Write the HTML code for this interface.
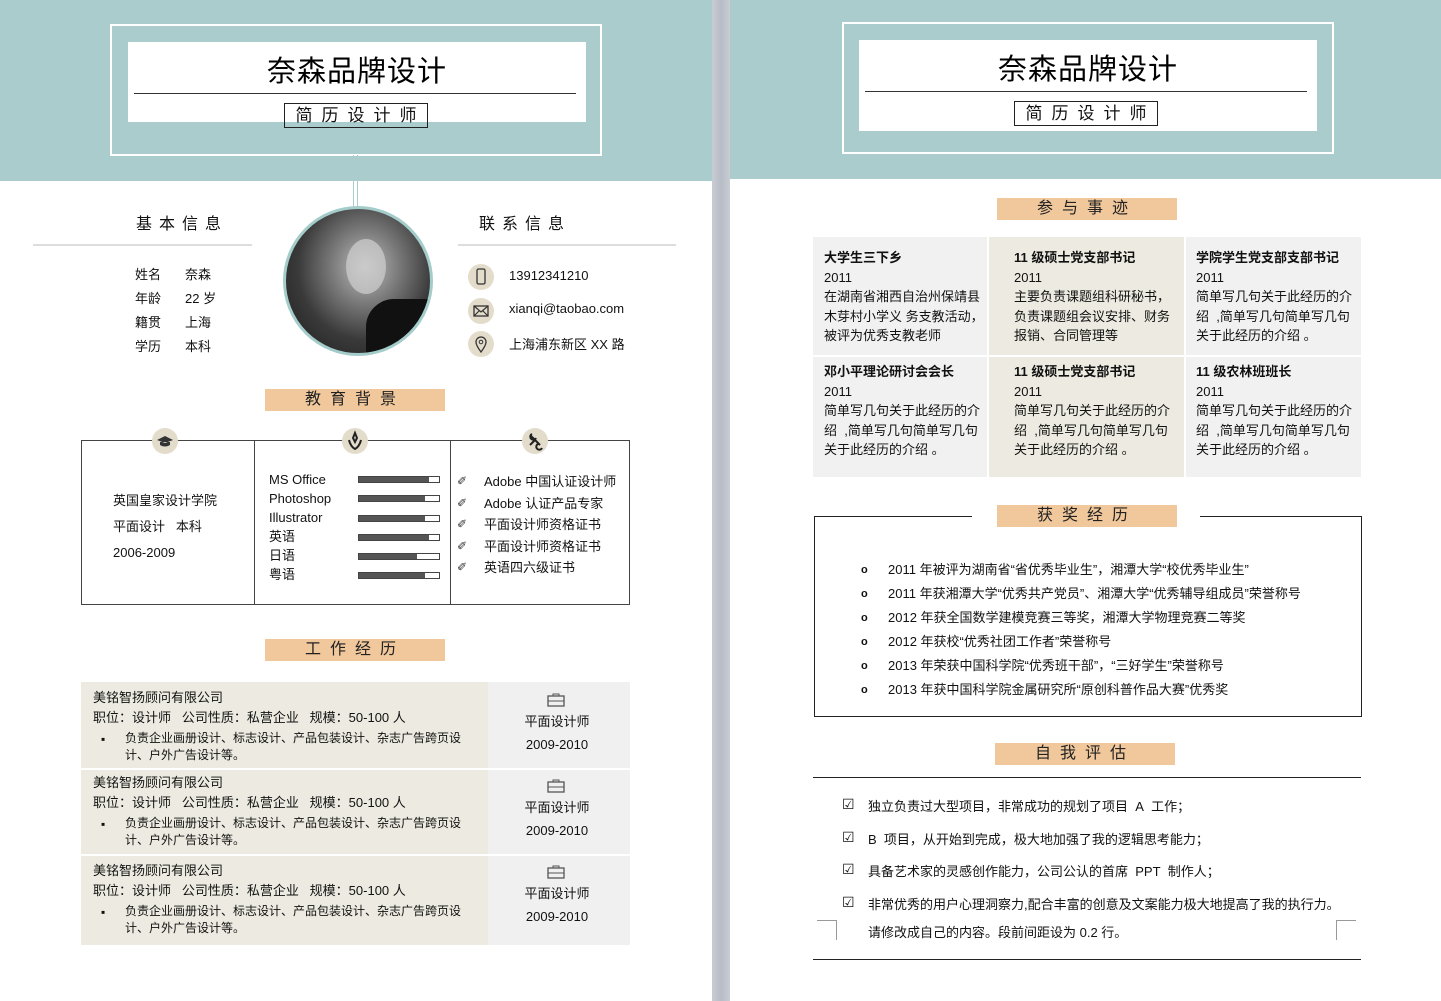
<!DOCTYPE html>
<html><head><meta charset="utf-8">
<style>
*{margin:0;padding:0;box-sizing:border-box}
body{width:1441px;height:1001px;overflow:hidden;background:#fff;position:relative;font-family:"Liberation Sans","Noto Sans CJK SC",sans-serif;color:#111;font-size:13px}
.a{position:absolute;white-space:nowrap}
.teal{background:#abcccd}
.bar{position:absolute;background:#f0c89c;height:22px;text-align:center;font-size:16px;letter-spacing:9px;line-height:22px;color:#222}
.ob{position:absolute;border:2px solid #fff}
.ib{position:absolute;background:#fff}
.t1{position:absolute;font-size:29px;letter-spacing:1px;color:#000}
.sub{position:absolute;border:1.5px solid #222;font-size:17px;letter-spacing:9px;text-align:center;line-height:22px;padding-left:9px}
.ic{position:absolute;width:26px;height:26px;border-radius:50%;background:#e3dccb}
.sk{position:absolute;height:7px;width:82px;border:1px solid #444;background:#fff}
.sk i{display:block;height:100%;background:#555}
.cell{position:absolute;padding:12px 0 0 11px;line-height:19.6px;font-size:13px}
.cell b{font-weight:bold}
</style></head><body>
<!-- LEFT PAGE -->
<div class="a teal" style="left:0;top:0;width:712px;height:181px"></div>
<div class="ob" style="left:110px;top:24px;width:492px;height:132px"></div>
<div class="ib" style="left:128px;top:42px;width:458px;height:80px"></div>
<div class="t1" style="left:128px;top:48px;width:458px;text-align:center">奈森品牌设计</div>
<div class="a" style="left:134px;top:93px;width:442px;height:1px;background:#333"></div>
<div class="sub" style="left:284px;top:103px;width:144px;height:25px;line-height:24px">简历设计师</div>
<div class="a" style="left:353px;top:155px;width:5px;height:52px;border-left:1px solid #abcccd;border-right:1px solid #abcccd"></div>

<div class="a" style="left:283px;top:206px;width:150px;height:150px;border-radius:50%;border:3px solid #a3cccb;background:radial-gradient(ellipse at 55% 40%,#bdbdbd 0%,#7a7a7a 30%,#3a3a3a 60%,#1a1a1a 100%);overflow:hidden">
 <div style="position:absolute;left:60px;top:30px;width:40px;height:55px;border-radius:50%;background:#d0d0d0;opacity:.7"></div>
 <div style="position:absolute;left:80px;top:90px;width:70px;height:70px;border-radius:40% 0 0 0;background:#111"></div>
</div>

<div class="a" style="left:136px;top:210px;font-size:16px;letter-spacing:7px">基本信息</div>
<div class="a" style="left:33px;top:244px;width:219px;height:2px;background:#ddd"></div>
<div class="a" style="left:479px;top:210px;font-size:16px;letter-spacing:7px">联系信息</div>
<div class="a" style="left:458px;top:244px;width:218px;height:2px;background:#ddd"></div>

<div class="a" style="left:135px;top:263px;line-height:24px">姓名<br>年龄<br>籍贯<br>学历</div>
<div class="a" style="left:185px;top:263px;line-height:24px">奈森<br>22 岁<br>上海<br>本科</div>

<div class="ic" style="left:468px;top:264px"><svg width="26" height="26"><rect x="9" y="5" width="8" height="15" rx="1.5" fill="none" stroke="#333" stroke-width="1.3"/></svg></div>
<div class="ic" style="left:468px;top:298px"><svg width="26" height="26"><rect x="6" y="8" width="14" height="10" fill="none" stroke="#333" stroke-width="1.3"/><path d="M6 8l7 6 7-6M6 18l5-5M20 18l-5-5" fill="none" stroke="#333" stroke-width="1.2"/></svg></div>
<div class="ic" style="left:468px;top:331px"><svg width="26" height="26"><path d="M13 21c-3-4-5-7-5-10a5 5 0 0110 0c0 3-2 6-5 10z" fill="none" stroke="#333" stroke-width="1.3"/><circle cx="13" cy="11" r="1.8" fill="none" stroke="#333"/></svg></div>
<div class="a" style="left:509px;top:268px">13912341210</div>
<div class="a" style="left:509px;top:301px">xianqi@taobao.com</div>
<div class="a" style="left:509px;top:334px">上海浦东新区 XX 路</div>

<div class="bar" style="left:265px;top:389px;width:180px">教育背景</div>
<div class="a" style="left:81px;top:440px;width:549px;height:165px;border:1px solid #444"></div>
<div class="a" style="left:254px;top:440px;width:1px;height:165px;background:#444"></div>
<div class="a" style="left:450px;top:440px;width:1px;height:165px;background:#444"></div>
<div class="ic" style="left:152px;top:428px"><svg width="26" height="26"><path d="M5 12l8-4 8 4-8 3z M8 14v3c3 2 7 2 10 0v-3" fill="#333"/></svg></div>
<div class="ic" style="left:342px;top:428px"><svg width="26" height="26"><path d="M13 5l2 5-2 4-2-4z M7 12c1 5 4 8 6 9 2-1 5-4 6-9" fill="none" stroke="#222" stroke-width="2"/></svg></div>
<div class="ic" style="left:522px;top:428px"><svg width="26" height="26"><path d="M8 7l10 10M8 17l5-5M10 6a3 3 0 104 4M16 16a3 3 0 104 4" fill="none" stroke="#222" stroke-width="2"/></svg></div>
<div class="a" style="left:113px;top:488px;line-height:26px">英国皇家设计学院<br>平面设计&nbsp;&nbsp;&nbsp;本科<br>2006-2009</div>
<div class="a" style="left:269px;top:470px;line-height:19px">MS Office<br>Photoshop<br>Illustrator<br>英语<br>日语<br>粤语</div>
<div class="sk" style="left:358px;top:476px"><i style="width:88%"></i></div>
<div class="sk" style="left:358px;top:495px"><i style="width:83%"></i></div>
<div class="sk" style="left:358px;top:515px"><i style="width:83%"></i></div>
<div class="sk" style="left:358px;top:534px"><i style="width:88%"></i></div>
<div class="sk" style="left:358px;top:553px"><i style="width:73%"></i></div>
<div class="sk" style="left:358px;top:572px"><i style="width:83%"></i></div>
<div class="a" style="left:457px;top:471px;line-height:21.5px;font-size:12px;color:#333">✐<br>✐<br>✐<br>✐<br>✐</div>
<div class="a" style="left:484px;top:471px;line-height:21.5px">Adobe 中国认证设计师<br>Adobe 认证产品专家<br>平面设计师资格证书<br>平面设计师资格证书<br>英语四六级证书</div>

<div class="bar" style="left:265px;top:639px;width:180px">工作经历</div>

<div class="a" style="left:81px;top:682px;width:407px;height:86px;background:#edebe1"></div>
<div class="a" style="left:488px;top:682px;width:142px;height:86px;background:#f0f0f0"></div>
<div class="a" style="left:81px;top:770px;width:407px;height:84px;background:#edebe1"></div>
<div class="a" style="left:488px;top:770px;width:142px;height:84px;background:#f0f0f0"></div>
<div class="a" style="left:81px;top:856px;width:407px;height:89px;background:#edebe1"></div>
<div class="a" style="left:488px;top:856px;width:142px;height:89px;background:#f0f0f0"></div>

<div class="a" style="left:93px;top:688px;line-height:20px">美铭智扬顾问有限公司<br>职位：设计师&nbsp;&nbsp;&nbsp;公司性质：私营企业&nbsp;&nbsp;&nbsp;规模：50-100 人</div>
<div class="a" style="left:101px;top:731px;font-size:12px;line-height:17px">▪</div>
<div class="a" style="left:125px;top:730px;font-size:12px;line-height:17px">负责企业画册设计、标志设计、产品包装设计、杂志广告跨页设<br>计、户外广告设计等。</div>
<div class="a" style="left:93px;top:773px;line-height:20px">美铭智扬顾问有限公司<br>职位：设计师&nbsp;&nbsp;&nbsp;公司性质：私营企业&nbsp;&nbsp;&nbsp;规模：50-100 人</div>
<div class="a" style="left:101px;top:816px;font-size:12px;line-height:17px">▪</div>
<div class="a" style="left:125px;top:815px;font-size:12px;line-height:17px">负责企业画册设计、标志设计、产品包装设计、杂志广告跨页设<br>计、户外广告设计等。</div>
<div class="a" style="left:93px;top:861px;line-height:20px">美铭智扬顾问有限公司<br>职位：设计师&nbsp;&nbsp;&nbsp;公司性质：私营企业&nbsp;&nbsp;&nbsp;规模：50-100 人</div>
<div class="a" style="left:101px;top:904px;font-size:12px;line-height:17px">▪</div>
<div class="a" style="left:125px;top:903px;font-size:12px;line-height:17px">负责企业画册设计、标志设计、产品包装设计、杂志广告跨页设<br>计、户外广告设计等。</div>

<svg class="a" style="left:547px;top:693px" width="18" height="14"><rect x="1" y="3" width="16" height="10" fill="none" stroke="#555" stroke-width="1.3"/><path d="M6 3V1h6v2M1 8h16" stroke="#555" fill="none"/></svg>
<svg class="a" style="left:547px;top:779px" width="18" height="14"><rect x="1" y="3" width="16" height="10" fill="none" stroke="#555" stroke-width="1.3"/><path d="M6 3V1h6v2M1 8h16" stroke="#555" fill="none"/></svg>
<svg class="a" style="left:547px;top:865px" width="18" height="14"><rect x="1" y="3" width="16" height="10" fill="none" stroke="#555" stroke-width="1.3"/><path d="M6 3V1h6v2M1 8h16" stroke="#555" fill="none"/></svg>
<div class="a" style="left:486px;top:710px;width:142px;text-align:center;line-height:23px">平面设计师<br>2009-2010</div>
<div class="a" style="left:486px;top:796px;width:142px;text-align:center;line-height:23px">平面设计师<br>2009-2010</div>
<div class="a" style="left:486px;top:882px;width:142px;text-align:center;line-height:23px">平面设计师<br>2009-2010</div>

<!-- GUTTER -->
<div class="a" style="left:712px;top:0;width:18px;height:1001px;background:linear-gradient(90deg,#c9ccd3,#b8bcc6 50%,#c9ccd3)"></div>

<!-- RIGHT PAGE -->
<div class="a teal" style="left:730px;top:0;width:711px;height:179px"></div>
<div class="ob" style="left:842px;top:22px;width:492px;height:132px"></div>
<div class="ib" style="left:859px;top:40px;width:458px;height:91px"></div>
<div class="t1" style="left:859px;top:46px;width:458px;text-align:center">奈森品牌设计</div>
<div class="a" style="left:865px;top:91px;width:442px;height:1px;background:#333"></div>
<div class="sub" style="left:1014px;top:101px;width:144px;height:25px;line-height:24px">简历设计师</div>

<div class="bar" style="left:997px;top:198px;width:180px">参与事迹</div>
<div class="a" style="left:813px;top:237px;width:174px;height:118px;background:#f1f1f1"></div>
<div class="a" style="left:989px;top:237px;width:195px;height:118px;background:#edebe1"></div>
<div class="a" style="left:1186px;top:237px;width:175px;height:118px;background:#f1f1f1"></div>
<div class="a" style="left:813px;top:357px;width:174px;height:120px;background:#f1f1f1"></div>
<div class="a" style="left:989px;top:357px;width:195px;height:120px;background:#edebe1"></div>
<div class="a" style="left:1186px;top:357px;width:175px;height:120px;background:#f1f1f1"></div>
<div class="cell" style="left:813px;top:236px"><b>大学生三下乡</b><br>2011<br>在湖南省湘西自治州保靖县<br>木芽村小学义 务支教活动，<br>被评为优秀支教老师</div>
<div class="cell" style="left:1003px;top:236px"><b>11 级硕士党支部书记</b><br>2011<br>主要负责课题组科研秘书，<br>负责课题组会议安排、财务<br>报销、合同管理等</div>
<div class="cell" style="left:1185px;top:236px"><b>学院学生党支部支部书记</b><br>2011<br>简单写几句关于此经历的介<br>绍&nbsp;&nbsp;,简单写几句简单写几句<br>关于此经历的介绍 。</div>
<div class="cell" style="left:813px;top:350px"><b>邓小平理论研讨会会长</b><br>2011<br>简单写几句关于此经历的介<br>绍&nbsp;&nbsp;,简单写几句简单写几句<br>关于此经历的介绍 。</div>
<div class="cell" style="left:1003px;top:350px"><b>11 级硕士党支部书记</b><br>2011<br>简单写几句关于此经历的介<br>绍&nbsp;&nbsp;,简单写几句简单写几句<br>关于此经历的介绍 。</div>
<div class="cell" style="left:1185px;top:350px"><b>11 级农林班班长</b><br>2011<br>简单写几句关于此经历的介<br>绍&nbsp;&nbsp;,简单写几句简单写几句<br>关于此经历的介绍 。</div>

<div class="a" style="left:814px;top:516px;width:548px;height:201px;border:1px solid #222"></div>
<div class="a" style="left:972px;top:510px;width:228px;height:12px;background:#fff"></div>
<div class="bar" style="left:997px;top:505px;width:180px">获奖经历</div>
<div class="a" style="left:861px;top:558px;line-height:24px;font-size:11px;font-weight:bold">o<br>o<br>o<br>o<br>o<br>o</div>
<div class="a" style="left:888px;top:558px;line-height:24px">2011 年被评为湖南省“省优秀毕业生”，湘潭大学“校优秀毕业生”<br>2011 年获湘潭大学“优秀共产党员”、湘潭大学“优秀辅导组成员”荣誉称号<br>2012 年获全国数学建模竞赛三等奖，湘潭大学物理竞赛二等奖<br>2012 年获校“优秀社团工作者”荣誉称号<br>2013 年荣获中国科学院“优秀班干部”，“三好学生”荣誉称号<br>2013 年获中国科学院金属研究所“原创科普作品大赛”优秀奖</div>

<div class="bar" style="left:995px;top:743px;width:180px">自我评估</div>
<div class="a" style="left:813px;top:777px;width:548px;height:1px;background:#222"></div>
<div class="a" style="left:842px;top:796px;font-size:14px">☑</div>
<div class="a" style="left:842px;top:829px;font-size:14px">☑</div>
<div class="a" style="left:842px;top:861px;font-size:14px">☑</div>
<div class="a" style="left:842px;top:894px;font-size:14px">☑</div>
<div class="a" style="left:868px;top:796px">独立负责过大型项目，非常成功的规划了项目&nbsp;&nbsp;A&nbsp;&nbsp;工作；</div>
<div class="a" style="left:868px;top:829px">B&nbsp;&nbsp;项目，从开始到完成，极大地加强了我的逻辑思考能力；</div>
<div class="a" style="left:868px;top:861px">具备艺术家的灵感创作能力，公司公认的首席&nbsp;&nbsp;PPT&nbsp;&nbsp;制作人；</div>
<div class="a" style="left:868px;top:894px">非常优秀的用户心理洞察力,配合丰富的创意及文案能力极大地提高了我的执行力。</div>
<div class="a" style="left:868px;top:922px">请修改成自己的内容。段前间距设为 0.2 行。</div>
<div class="a" style="left:817px;top:920px;width:20px;height:20px;border-top:1px solid #999;border-right:1px solid #999"></div>
<div class="a" style="left:1336px;top:920px;width:20px;height:20px;border-top:1px solid #999;border-left:1px solid #999"></div>
<div class="a" style="left:813px;top:959px;width:548px;height:1px;background:#222"></div>
</body></html>
